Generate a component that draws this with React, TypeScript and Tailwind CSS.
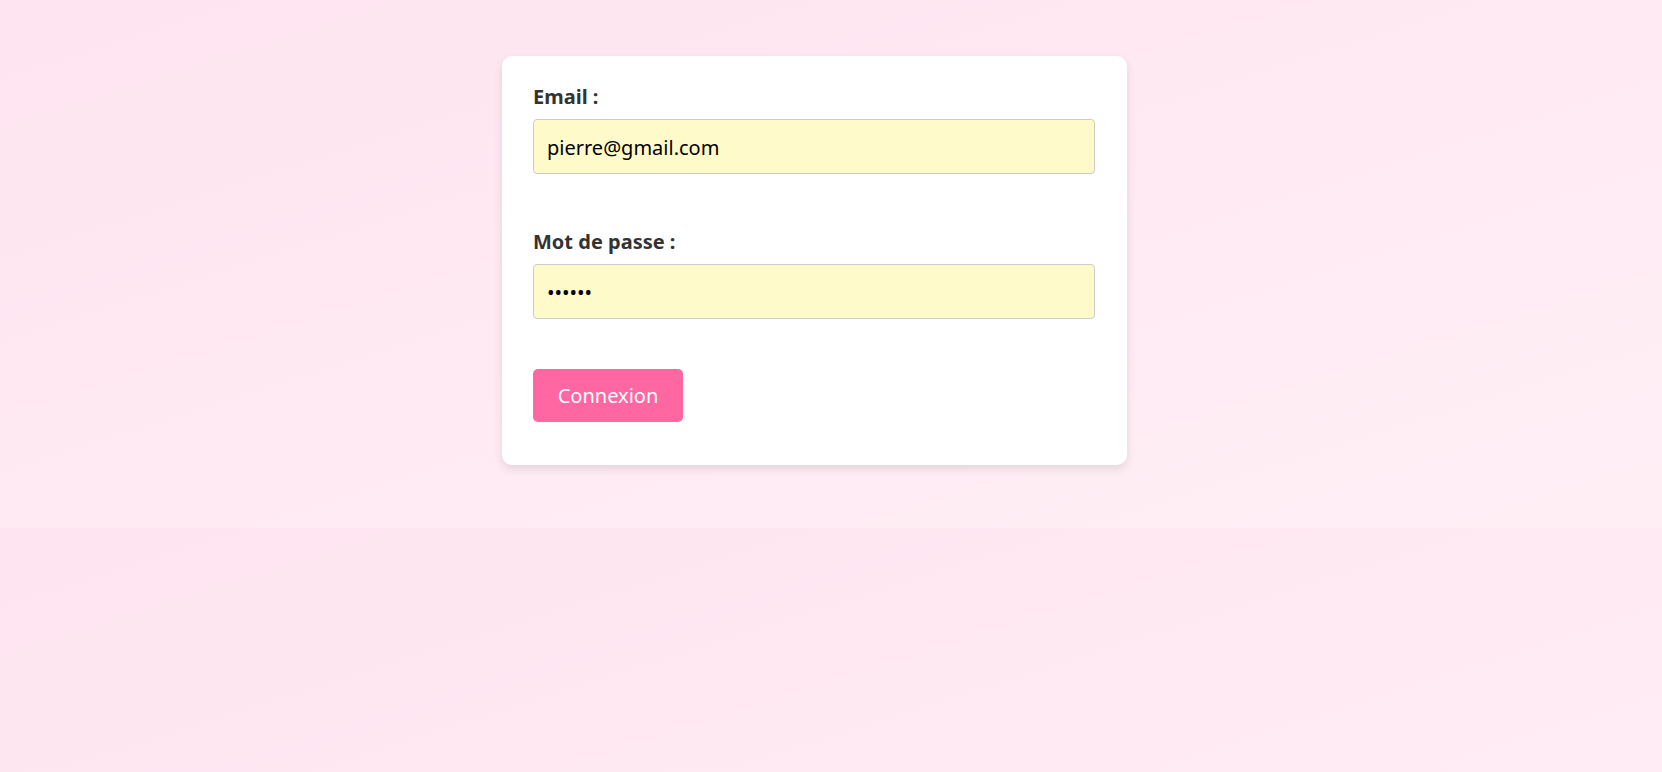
import React from "react";

export default function App() {
  return (
    <div
      className="min-h-screen w-full bg-[linear-gradient(to_bottom_right,#fee4f0,#ffeff5)] bg-[length:100%_528px] bg-repeat"
      style={{ fontFamily: '"Noto Sans", "Open Sans", sans-serif' }}
    >
      <div className="flex justify-center pt-[56px] pr-[33px]">
        <form
          className="w-[625px] rounded-[10px] bg-white pl-[31px] pr-[32px] pt-[27px] pb-[43px] shadow-[0_4px_10px_rgba(0,0,0,0.1)]"
          onSubmit={(e) => e.preventDefault()}
        >
          <label className="block text-[20px] leading-[27px] font-bold text-[#333333] mb-[9px]">
            Email :
          </label>
          <input
            type="email"
            defaultValue="pierre@gmail.com"
            className="block w-full h-[55px] rounded-[4px] border border-[#cccccc] bg-[#fffac9] pl-[13px] pr-[13px] pt-[2px] text-[20px] leading-[27px] text-black outline-none"
          />
          <div className="h-[54px]" />
          <label className="block text-[20px] leading-[27px] font-bold text-[#333333] mb-[9px]">
            Mot de passe :
          </label>
          <input
            type="password"
            defaultValue="123456"
            className="block w-full h-[55px] rounded-[4px] border border-[#cccccc] bg-[#fffac9] pl-[13px] pr-[13px] pt-[2px] text-[20px] leading-[27px] text-black outline-none"
          />
          <div className="h-[50px]" />
          <button
            type="submit"
            className="block h-[53px] w-[150px] rounded-[5px] bg-[#ff67a3] text-[20px] leading-[27px] text-white"
          >
            Connexion
          </button>
        </form>
      </div>
    </div>
  );
}
